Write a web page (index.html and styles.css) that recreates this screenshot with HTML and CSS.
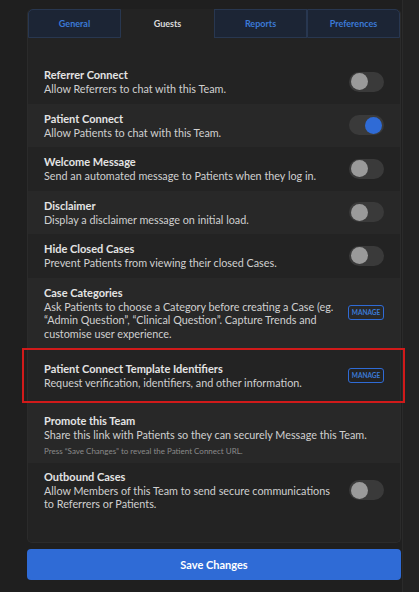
FILE: index.html
```html
<!DOCTYPE html>
<html lang="en">
<head>
    <meta charset="UTF-8">
    <meta name="viewport" content="width=device-width, initial-scale=1.0">
    <title>Team Settings - Guests</title>
    <link rel="stylesheet" href="styles.css">
</head>
<body>
    <div class="page">
        <div class="main">
            <div class="panel">
                <div class="tabs">
                    <div class="tab">General</div>
                    <div class="tab active">Guests</div>
                    <div class="tab">Reports</div>
                    <div class="tab">Preferences</div>
                </div>

                <div class="rows">
                    <div class="row">
                        <div class="text">
                            <div class="title">Referrer Connect</div>
                            <div class="desc">Allow Referrers to chat with this Team.</div>
                        </div>
                        <div class="toggle"><span class="knob"></span></div>
                    </div>
                    <div class="row">
                        <div class="text">
                            <div class="title">Patient Connect</div>
                            <div class="desc">Allow Patients to chat with this Team.</div>
                        </div>
                        <div class="toggle on"><span class="knob"></span></div>
                    </div>
                    <div class="row">
                        <div class="text">
                            <div class="title">Welcome Message</div>
                            <div class="desc">Send an automated message to Patients when they log in.</div>
                        </div>
                        <div class="toggle"><span class="knob"></span></div>
                    </div>
                    <div class="row">
                        <div class="text">
                            <div class="title">Disclaimer</div>
                            <div class="desc">Display a disclaimer message on initial load.</div>
                        </div>
                        <div class="toggle"><span class="knob"></span></div>
                    </div>
                    <div class="row">
                        <div class="text">
                            <div class="title">Hide Closed Cases</div>
                            <div class="desc">Prevent Patients from viewing their closed Cases.</div>
                        </div>
                        <div class="toggle"><span class="knob"></span></div>
                    </div>
                    <div class="row">
                        <div class="text narrow">
                            <div class="title">Case Categories</div>
                            <div class="desc">Ask Patients to choose a Category before creating a Case (eg. “Admin Question”, “Clinical Question”. Capture Trends and customise user experience.</div>
                        </div>
                        <button class="manage">MANAGE</button>
                    </div>
                    <div class="row highlight">
                        <div class="text">
                            <div class="title">Patient Connect Template Identifiers</div>
                            <div class="desc">Request verification, identifiers, and other information.</div>
                        </div>
                        <button class="manage">MANAGE</button>
                    </div>
                    <div class="row promote">
                        <div class="text">
                            <div class="title">Promote this Team</div>
                            <div class="desc">Share this link with Patients so they can securely Message this Team.</div>
                            <div class="note">Press “Save Changes” to reveal the Patient Connect URL.</div>
                        </div>
                    </div>
                    <div class="row outbound">
                        <div class="text narrow">
                            <div class="title">Outbound Cases</div>
                            <div class="desc">Allow Members of this Team to send secure communications to Referrers or Patients.</div>
                        </div>
                        <div class="toggle"><span class="knob"></span></div>
                    </div>
                </div>
            </div>

            <button class="save-btn">Save Changes</button>
        </div>
        <div class="scrollbar"></div>
    </div>
</body>
</html>
```

FILE: styles.css
```css
body {
    margin: 0;
    background-color: #1f1f1f;
    font-family: Lato, "Liberation Sans", Arial, sans-serif;
    color: #d4d4d4;
}

.page {
    display: flex;
    height: 592px;
    overflow: hidden;
}

.main {
    flex: 1;
    padding: 9px 1px 0 27px;
}

.scrollbar {
    width: 16px;
    background-color: #222;
    border-left: 1px solid #2a2a2a;
}

.panel {
    background-color: #232323;
    border: 1px solid #2b2b2b;
    border-top: none;
    border-radius: 5px;
    padding-bottom: 23px;
}

/* tabs */
.tabs {
    display: flex;
    height: 29px;
}

.tab {
    flex: 1;
    display: flex;
    align-items: center;
    justify-content: center;
    padding-bottom: 1px;
    background-color: #1c2535;
    border: 1px solid #283750;
    color: #3b7ad6;
    font-size: 9px;
    font-weight: bold;
}

.tab:first-child {
    border-top-left-radius: 5px;
}

.tab:last-child {
    border-top-right-radius: 5px;
}

.tab.active {
    background-color: #232323;
    border-color: #232323;
    color: #dcdcdc;
}

/* rows */
.rows {
    padding-top: 22px;
}

.row {
    position: relative;
    display: flex;
    align-items: center;
    justify-content: space-between;
    padding: 8px 16px;
}

.row:nth-child(even) {
    background-color: #282828;
}

.text.narrow {
    max-width: 297px;
}

.title {
    font-size: 11px;
    line-height: 14px;
    font-weight: bold;
    color: #e4e4e4;
}

.desc {
    font-size: 10.8px;
    line-height: 13.5px;
    color: #d0d0d0;
}

.note {
    margin-top: 3px;
    font-size: 8px;
    line-height: 12px;
    color: #8a8a8a;
}

.row.highlight {
    padding-top: 14px;
    padding-bottom: 13px;
}

.row.highlight::after {
    content: "";
    position: absolute;
    top: 0;
    bottom: 0;
    left: -6px;
    right: -5px;
    border: 2px solid #d11a1a;
}

.row.promote {
    padding-top: 11px;
    padding-bottom: 6px;
}

.row.promote .desc {
    line-height: 14px;
}

.row.outbound {
    padding-top: 7px;
}

/* controls */
.toggle {
    flex-shrink: 0;
    width: 35px;
    height: 20px;
    border-radius: 10px;
    background-color: #3a3a3a;
    position: relative;
}

.knob {
    position: absolute;
    top: 1.5px;
    left: 2px;
    width: 17px;
    height: 17px;
    border-radius: 50%;
    background-color: #9a9a9a;
}

.toggle.on .knob {
    left: 16px;
    background-color: #2f6bd6;
}

.manage {
    flex-shrink: 0;
    width: 36px;
    height: 15px;
    padding: 0;
    border: 1px solid #2f6bd6;
    border-radius: 3px;
    background: transparent;
    color: #3b7ad6;
    font-family: inherit;
    font-size: 6.5px;
    font-weight: bold;
}

.save-btn {
    display: block;
    width: 100%;
    height: 31px;
    margin-top: 6px;
    border: none;
    border-radius: 4px;
    background-color: #2f6bd6;
    color: #fff;
    font-family: inherit;
    font-size: 11px;
    font-weight: bold;
}
```
